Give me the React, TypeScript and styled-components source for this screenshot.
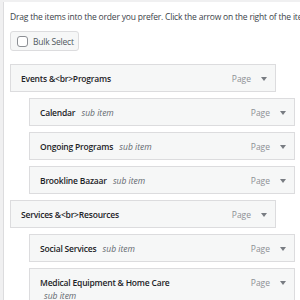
import React from "react";
import styled, { createGlobalStyle } from "styled-components";

const Global = createGlobalStyle`
  html, body { margin: 0; padding: 0; background: #f0f0f1; }
  body { font-family: "Open Sans", "Liberation Sans", sans-serif; color: #1d2327; overflow: hidden; }
`;

const Page = styled.div`
  padding: 2px 0 0 3px;
  width: 300px;
  height: 300px;
  box-sizing: border-box;
  overflow: hidden;
`;

const Panel = styled.div`
  background: #fff;
  border-left: 1px solid #dcdcde;
  padding: 9px 0 0 6px;
  height: 100%;
  box-sizing: border-box;
`;

const Intro = styled.p`
  margin: 0;
  font-size: 8.5px;
  letter-spacing: -0.2px;
  line-height: 11px;
  color: #3c434a;
  white-space: nowrap;
`;

const BulkButton = styled.button`
  margin-top: 9px;
  display: flex;
  align-items: center;
  gap: 5px;
  height: 20px;
  width: 69px;
  padding: 0 6px;
  background: #f6f7f7;
  border: 1px solid #dcdcde;
  border-radius: 3px;
  font-family: inherit;
  font-size: 8.5px;
  letter-spacing: -0.2px;
  white-space: nowrap;
  color: #50575e;
  box-sizing: border-box;
`;

const Check = styled.span`
  flex: none;
  width: 11px;
  height: 11px;
  border: 1px solid #8c8f94;
  border-radius: 3px;
  background: #fff;
  box-sizing: border-box;
`;

const List = styled.div`
  margin-top: 13px;
  display: flex;
  flex-direction: column;
  gap: 6px;
`;

const Item = styled.div<{ $depth: number }>`
  margin-left: ${(p) => p.$depth * 19}px;
  width: 266px;
  box-sizing: border-box;
  display: flex;
  align-items: flex-start;
  padding: 7px 8px 6px 10px;
  background: #f6f7f7;
  border: 1px solid #dcdcde;
  font-size: 8.5px;
  line-height: 13px;
`;

const Title = styled.div`
  flex: 1;
  margin-right: 60px;
`;

const Name = styled.span`
  font-weight: 600;
  letter-spacing: -0.2px;
  color: #1d2327;
`;

const Sub = styled.span`
  font-style: italic;
  color: #646970;
  margin-left: 4px;
  white-space: nowrap;
`;

const Controls = styled.div`
  display: flex;
  align-items: center;
  gap: 10px;
  color: #8c8f94;
  height: 13px;
`;

const Type = styled.span`
  font-size: 8.5px;
`;

const Arrow = styled.svg`
  width: 6px;
  height: 4px;
  fill: #787c82;
`;

const items = [
  { name: "Events &<br>Programs", depth: 0 },
  { name: "Calendar", depth: 1 },
  { name: "Ongoing Programs", depth: 1 },
  { name: "Brookline Bazaar", depth: 1 },
  { name: "Services &<br>Resources", depth: 0 },
  { name: "Social Services", depth: 1 },
  { name: "Medical Equipment & Home Care", depth: 1 },
];

export default function App() {
  return (
    <>
      <Global />
      <Page>
        <Panel>
          <Intro>Drag the items into the order you prefer. Click the arrow on the right of the item</Intro>
          <BulkButton>
            <Check />
            Bulk Select
          </BulkButton>
          <List>
            {items.map((it) => (
              <Item key={it.name} $depth={it.depth}>
                <Title>
                  <Name>{it.name}</Name>
                  {it.depth > 0 && (
                    <>
                      {" "}
                      <Sub>sub item</Sub>
                    </>
                  )}
                </Title>
                <Controls>
                  <Type>Page</Type>
                  <Arrow viewBox="0 0 6 4">
                    <polygon points="0,0 6,0 3,4" />
                  </Arrow>
                </Controls>
              </Item>
            ))}
          </List>
        </Panel>
      </Page>
    </>
  );
}
